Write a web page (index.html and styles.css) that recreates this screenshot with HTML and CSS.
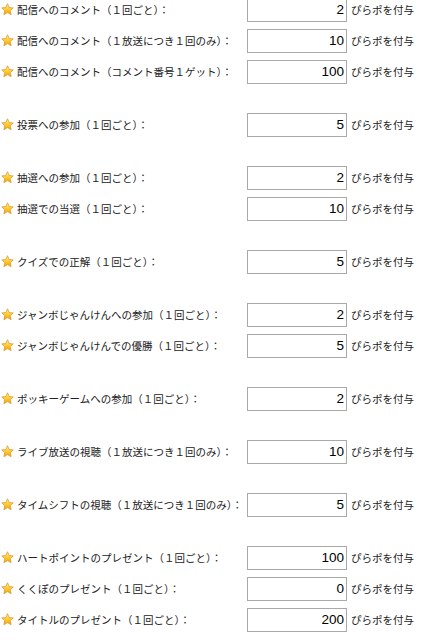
FILE: index.html
```html
<!DOCTYPE html>
<html lang="ja">
<head>
<meta charset="utf-8">
<link rel="stylesheet" href="styles.css">
</head>
<body>
<svg width="0" height="0" class="defs">
  <defs>
    <linearGradient id="sg" x1="0" y1="0" x2="0" y2="1">
      <stop offset="0" stop-color="#fff2a0"/>
      <stop offset="0.55" stop-color="#ffc928"/>
      <stop offset="1" stop-color="#f0a010"/>
    </linearGradient>
    <symbol id="star" viewBox="0 0 14 14">
      <path d="M7 0.8 L8.8 4.9 L13.2 5.3 L9.9 8.2 L10.9 12.6 L7 10.3 L3.1 12.6 L4.1 8.2 L0.8 5.3 L5.2 4.9 Z" fill="url(#sg)" stroke="#d9962a" stroke-width="0.8" stroke-linejoin="round"/>
    </symbol>
  </defs>
</svg>
<div class="list">
  <div class="group">
    <div class="row"><div class="label"><svg class="star"><use href="#star"/></svg>配信へのコメント（１回ごと）：</div><input class="num" type="text" value="2"><span class="unit">ぴらポを付与</span></div>
    <div class="row"><div class="label"><svg class="star"><use href="#star"/></svg>配信へのコメント（１放送につき１回のみ）：</div><input class="num" type="text" value="10"><span class="unit">ぴらポを付与</span></div>
    <div class="row"><div class="label"><svg class="star"><use href="#star"/></svg>配信へのコメント（コメント番号１ゲット）：</div><input class="num" type="text" value="100"><span class="unit">ぴらポを付与</span></div>
  </div>
  <div class="group">
    <div class="row"><div class="label"><svg class="star"><use href="#star"/></svg>投票への参加（１回ごと）：</div><input class="num" type="text" value="5"><span class="unit">ぴらポを付与</span></div>
  </div>
  <div class="group">
    <div class="row"><div class="label"><svg class="star"><use href="#star"/></svg>抽選への参加（１回ごと）：</div><input class="num" type="text" value="2"><span class="unit">ぴらポを付与</span></div>
    <div class="row"><div class="label"><svg class="star"><use href="#star"/></svg>抽選での当選（１回ごと）：</div><input class="num" type="text" value="10"><span class="unit">ぴらポを付与</span></div>
  </div>
  <div class="group">
    <div class="row"><div class="label"><svg class="star"><use href="#star"/></svg>クイズでの正解（１回ごと）：</div><input class="num" type="text" value="5"><span class="unit">ぴらポを付与</span></div>
  </div>
  <div class="group">
    <div class="row"><div class="label"><svg class="star"><use href="#star"/></svg>ジャンボじゃんけんへの参加（１回ごと）：</div><input class="num" type="text" value="2"><span class="unit">ぴらポを付与</span></div>
    <div class="row"><div class="label"><svg class="star"><use href="#star"/></svg>ジャンボじゃんけんでの優勝（１回ごと）：</div><input class="num" type="text" value="5"><span class="unit">ぴらポを付与</span></div>
  </div>
  <div class="group">
    <div class="row"><div class="label"><svg class="star"><use href="#star"/></svg>ポッキーゲームへの参加（１回ごと）：</div><input class="num" type="text" value="2"><span class="unit">ぴらポを付与</span></div>
  </div>
  <div class="group">
    <div class="row"><div class="label"><svg class="star"><use href="#star"/></svg>ライブ放送の視聴（１放送につき１回のみ）：</div><input class="num" type="text" value="10"><span class="unit">ぴらポを付与</span></div>
  </div>
  <div class="group">
    <div class="row"><div class="label"><svg class="star"><use href="#star"/></svg>タイムシフトの視聴（１放送につき１回のみ）：</div><input class="num" type="text" value="5"><span class="unit">ぴらポを付与</span></div>
  </div>
  <div class="group">
    <div class="row"><div class="label"><svg class="star"><use href="#star"/></svg>ハートポイントのプレゼント（１回ごと）：</div><input class="num" type="text" value="100"><span class="unit">ぴらポを付与</span></div>
    <div class="row"><div class="label"><svg class="star"><use href="#star"/></svg>くくぽのプレゼント（１回ごと）：</div><input class="num" type="text" value="0"><span class="unit">ぴらポを付与</span></div>
    <div class="row"><div class="label"><svg class="star"><use href="#star"/></svg>タイトルのプレゼント（１回ごと）：</div><input class="num" type="text" value="200"><span class="unit">ぴらポを付与</span></div>
  </div>
</div>
</body>
</html>
```
FILE: styles.css
```css
html, body {
  margin: 0;
  padding: 0;
  background: #ffffff;
}
body {
  font-family: "Noto Sans CJK JP", "Noto Sans", sans-serif;
  font-size: 10.5px;
  color: #222222;
  overflow: hidden;
}
.defs {
  position: absolute;
  width: 0;
  height: 0;
}
.list {
  margin-top: -6px;
  display: flex;
  flex-direction: column;
  gap: 22px;
}
.row {
  display: flex;
  align-items: center;
  height: 31px;
}
.label {
  width: 247px;
  flex: none;
  display: flex;
  align-items: center;
  white-space: nowrap;
  padding-left: 1px;
  box-sizing: border-box;
}
.star {
  width: 13px;
  height: 13px;
  margin-right: 3px;
  flex: none;
}
.num {
  box-sizing: border-box;
  width: 100px;
  height: 24px;
  margin: 0;
  padding: 0 2px 0 2px;
  border: 1px solid #a9a9a9;
  border-radius: 0;
  font-family: "Liberation Sans", Arial, sans-serif;
  font-size: 13.5px;
  color: #000000;
  text-align: right;
  background: #ffffff;
  outline: none;
}
.unit {
  margin-left: 4px;
  white-space: nowrap;
}
```
